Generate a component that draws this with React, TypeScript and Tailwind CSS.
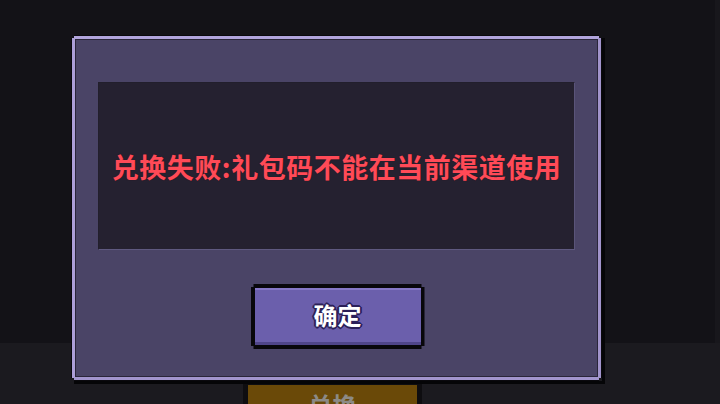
import React from "react";

const PIXEL_NOTCH =
  "[clip-path:polygon(3px_0,calc(100%_-_3px)_0,calc(100%_-_3px)_3px,100%_3px,100%_calc(100%_-_3px),calc(100%_-_3px)_calc(100%_-_3px),calc(100%_-_3px)_100%,3px_100%,3px_calc(100%_-_3px),0_calc(100%_-_3px),0_3px,3px_3px)]";

const App: React.FC = () => {
  return (
    <div className="relative h-[404px] w-[720px] overflow-hidden bg-[#131217] font-['Noto_Sans_CJK_SC','Noto_Sans',sans-serif]">
      {/* Page behind the modal */}
      <div className="flex h-full flex-col">
        <div className="h-[343px] shrink-0 border-r-[5px] border-[#18171c] bg-[#131217]" />
        <div className="flex min-h-0 flex-1 bg-[#1b1a1f] pt-[40px] pl-[243px]">
          <div className="flex h-[30px] w-[179px] shrink-0 justify-center border-x-[5px] border-t-[2px] border-[#0e0d10] bg-[#6a4908] pt-[8px] text-[24px] font-bold leading-none text-[#8c8a86]">
            兑换
          </div>
        </div>
      </div>

      {/* Modal */}
      <div className="absolute left-[71px] top-[35px] h-[346px] w-[531px] shadow-[3px_3px_0_#050507]">
        <div className={`h-full w-full bg-[#0a090d] p-px ${PIXEL_NOTCH}`}>
          <div className="h-full w-full border-[3px] border-t-[#b1a4dc] border-l-[#ad9fd8] border-r-[#a294cc] border-b-[#a295cd]">
            <div className="flex h-full w-full flex-col items-center border border-[#2a2639] bg-[#4a4466] px-[22px] pt-[42px]">
              {/* Message box */}
              <div className="flex h-[168px] w-full items-center justify-center border border-t-[#221f2c] border-l-[#221f2c] border-r-[#5a5479] border-b-[#5f5980] bg-[#252130]">
                <p className="text-[27px] font-bold leading-none tracking-[0.5px] text-[#ff4a57] [text-shadow:0_0_1px_#3a1218]">
                  兑换失败:礼包码不能在当前渠道使用
                </p>
              </div>

              {/* Confirm button */}
              <div className={`mt-[34px] ml-[2px] h-[65px] w-[174px] bg-[#08070b] p-[4px] ${PIXEL_NOTCH}`}>
                <button className="flex h-full w-full items-center justify-center border-t-[2px] border-b-[3px] border-t-[#8577c6] border-b-[#4f4589] bg-[#6b5fac] pb-[2px] text-[24px] font-bold text-white [text-shadow:2px_0_0_#2b2058,-2px_0_0_#2b2058,0_2px_0_#2b2058,0_-2px_0_#2b2058,1px_1px_0_#2b2058,-1px_-1px_0_#2b2058,1px_-1px_0_#2b2058,-1px_1px_0_#2b2058]">
                  确定
                </button>
              </div>
            </div>
          </div>
        </div>
      </div>
    </div>
  );
};

export default App;
